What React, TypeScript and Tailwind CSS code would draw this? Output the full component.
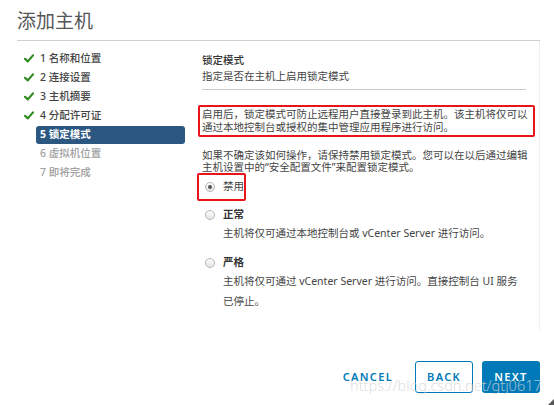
import React from 'react';

const steps = [
  { n: 1, label: '名称和位置', done: true },
  { n: 2, label: '连接设置', done: true },
  { n: 3, label: '主机摘要', done: true },
  { n: 4, label: '分配许可证', done: true },
  { n: 5, label: '锁定模式', active: true },
  { n: 6, label: '虚拟机位置' },
  { n: 7, label: '即将完成' },
];

const Check = () => (
  <svg width="10" height="9" viewBox="0 0 10 9">
    <path d="M1 4.8 L3.8 7.4 L9 1.4" fill="none" stroke="#2f8a1e" strokeWidth="2.2" strokeLinecap="round" strokeLinejoin="round" />
  </svg>
);

const Radio = ({ checked }: { checked?: boolean }) => (
  <span className="w-[10px] h-[10px] rounded-full border border-[#b5b5b5] bg-gradient-to-b from-white to-[#e4e4e4] flex items-center justify-center shrink-0">
    {checked && <span className="w-[4px] h-[4px] rounded-full bg-[#555]" />}
  </span>
);

const App: React.FC = () => {
  return (
    <div
      className="relative w-[554px] h-[405px] bg-white text-[#333] flex flex-col overflow-hidden"
      style={{ fontFamily: '"Noto Sans", "Noto Sans CJK SC", sans-serif' }}
    >
      <div className="ml-[17px] mr-[14px] h-[41px] pt-[8px] border-b border-[#cfcfcf]">
        <h1 className="text-[19px] leading-[26px] text-[#555] font-normal">添加主机</h1>
      </div>

      <div className="flex h-[320px]">
        <div className="w-[190px] pl-[24px] pr-[5px] pt-[8px] text-[10.5px]">
          {steps.map((s) => (
            <div key={s.n} className="flex items-center h-[19px]">
              <div className="w-[12px] flex items-center">{s.done && <Check />}</div>
              <div
                className={
                  s.active
                    ? 'flex-1 h-[18px] flex items-center pl-[4px] rounded-[3px] bg-[#2b5781] text-white font-bold'
                    : s.done
                    ? 'flex-1 pl-[4px] text-[#444] font-medium'
                    : 'flex-1 pl-[4px] text-[#a0a0a0] font-medium'
                }
              >
                {s.n} {s.label}
              </div>
            </div>
          ))}
        </div>

        <div className="w-[350px] h-[289px] pl-[12px] pr-[13px] pt-[11px] border-r border-[#f0f0f0] text-[10.5px]">
          <div className="leading-[16px] font-medium text-[#333]">锁定模式</div>
          <div className="leading-[16px] text-[#444]">指定是否在主机上启用锁定模式</div>
          <div className="mt-[5px] border-b border-[#c8c8c8]" />

          <div className="mt-[15px] -ml-[4px] -mr-[9px] h-[32px] border-2 border-[#e8141a] rounded-[2px] pl-[2px] flex flex-col justify-center leading-[13px] text-[#444]">
            <span className="whitespace-nowrap">启用后，锁定模式可防止远程用户直接登录到此主机。该主机将仅可以</span>
            <span className="whitespace-nowrap">通过本地控制台或授权的集中管理应用程序进行访问。</span>
          </div>

          <div className="mt-[12px] leading-[12px] text-[#444]">
            <div className="whitespace-nowrap">如果不确定该如何操作，请保持禁用锁定模式。您可以在以后通过编辑</div>
            <div className="whitespace-nowrap">主机设置中的“安全配置文件”来配置锁定模式。</div>
          </div>

          <div className="-ml-[5px] w-[49px] h-[28px] border-2 border-[#e8141a] rounded-[2px] pl-[6px] flex items-center gap-[8px]">
            <Radio checked />
            <span className="text-[#444]">禁用</span>
          </div>

          <div className="mt-[6px] h-[16px] flex items-center gap-[8px] pl-[3px]">
            <Radio />
            <span className="font-bold text-[#333]">正常</span>
          </div>
          <div className="mt-[2px] pl-[21px] leading-[16px] text-[#444] whitespace-nowrap">
            主机将仅可通过本地控制台或 vCenter Server 进行访问。
          </div>

          <div className="mt-[14px] h-[16px] flex items-center gap-[8px] pl-[3px]">
            <Radio />
            <span className="font-bold text-[#333]">严格</span>
          </div>
          <div className="pl-[21px] leading-[20px] text-[#444]">
            <div className="whitespace-nowrap">主机将仅可通过 vCenter Server 进行访问。直接控制台 UI 服务</div>
            <div>已停止。</div>
          </div>
        </div>
      </div>

      <div className="flex items-center justify-end pr-[14px] h-[32px] text-[11px] font-semibold tracking-[0.12em] text-[#0079b8]">
        <button className="mr-[22px] uppercase">CANCEL</button>
        <button className="w-[58px] h-[32px] border border-[#0079b8] rounded-[3px] mr-[9px]">BACK</button>
        <button className="w-[58px] h-[32px] rounded-[3px] bg-[#0079b8] text-white">NEXT</button>
      </div>

      <div className="absolute left-[350px] top-[376px] text-[14.5px] leading-[18px] font-light text-[#d6d6d6]/80 whitespace-nowrap pointer-events-none">
        https://blog.csdn.net/gtj0617
      </div>

      <svg className="absolute right-0 bottom-0" width="6" height="6" viewBox="0 0 6 6">
        <path d="M6 0 L6 6 L0 6 Z" fill="#555" />
      </svg>
    </div>
  );
};

export default App;
